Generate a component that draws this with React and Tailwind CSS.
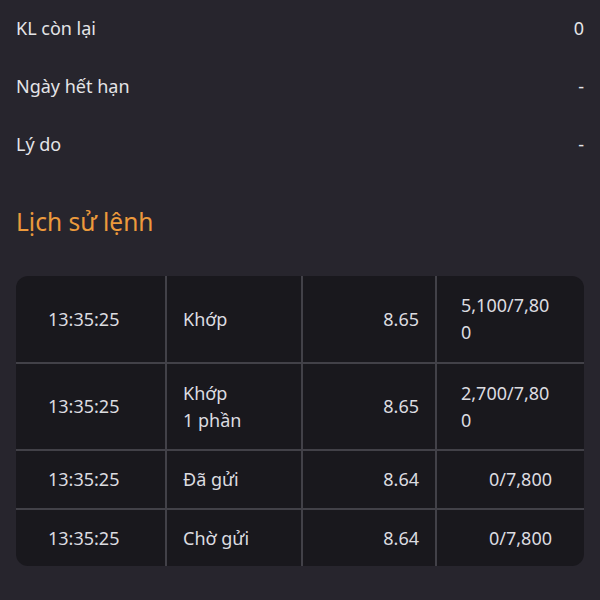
import React from "react";

const rows = [
  { t: "13:35:25", s: ["Khớp"], p: "8.65", q: "5,100/7,800", h: "h-[86px]" },
  { t: "13:35:25", s: ["Khớp", "1 phần"], p: "8.65", q: "2,700/7,800", h: "h-[87px]" },
  { t: "13:35:25", s: ["Đã gửi"], p: "8.64", q: "0/7,800", h: "h-[59px]" },
  { t: "13:35:25", s: ["Chờ gửi"], p: "8.64", q: "0/7,800", h: "h-[58px]" },
];

export default function App() {
  return (
    <div
      className="w-[600px] h-[600px] bg-[#27252d] text-[#e4e4e7] px-4 overflow-hidden"
      style={{ fontFamily: '"Noto Sans", sans-serif' }}
    >
      <div className="-mt-px">
        {[
          ["KL còn lại", "0"],
          ["Ngày hết hạn", "-"],
          ["Lý do", "-"],
        ].map(([a, b]) => (
          <div key={a} className="h-[58px] flex items-center justify-between text-[18px]">
            <span>{a}</span>
            <span>{b}</span>
          </div>
        ))}
      </div>
      <div className="mt-[33px] text-[24.5px] leading-[32px] text-[#ec9a3c]">Lịch sử lệnh</div>
      <div className="mt-[38px] bg-[#19181d] rounded-[12px] overflow-hidden text-[18px] leading-[27px] text-[#dcdce0]">
        {rows.map((r, i) => (
          <div
            key={i}
            className={`grid grid-cols-[149px_136px_134px_149px] ${r.h} ${i > 0 ? "border-t-2 border-[#424148]" : ""}`}
          >
            <div className="flex items-center pl-8">{r.t}</div>
            <div className="flex flex-col justify-center pl-4 border-l-2 border-[#424148]">
              {r.s.map((x) => (
                <span key={x}>{x}</span>
              ))}
            </div>
            <div className="flex items-center justify-end pr-4 border-l-2 border-[#424148]">{r.p}</div>
            <div className="flex items-center justify-end pl-6 pr-8 border-l-2 border-[#424148]">
              <div className="break-all text-left">{r.q}</div>
            </div>
          </div>
        ))}
      </div>
    </div>
  );
}
